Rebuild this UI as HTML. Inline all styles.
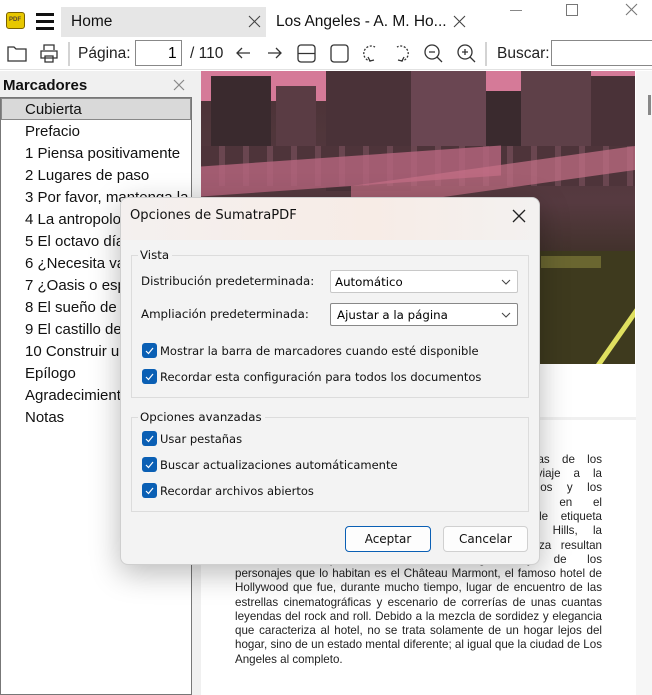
<!DOCTYPE html><html><head><style>
*{box-sizing:border-box;margin:0;padding:0}
body{width:652px;height:695px;overflow:hidden;background:#fff;font-family:"Liberation Sans",sans-serif;position:relative;color:#000}
.a{position:absolute}
.seg{font-family:"DejaVu Sans","Liberation Sans",sans-serif}
.li{position:absolute;left:25px;font-size:15px;font-family:"Liberation Sans",sans-serif;color:#111;white-space:nowrap}
.pt{position:absolute;left:235px;width:367px;font-size:11.6px;text-align:justify;text-align-last:justify;white-space:nowrap;overflow:hidden;color:#222;line-height:14px}
.cb{position:absolute;left:142px;width:15px;height:15px;background:#0a5fb4;border-radius:3px}
.cb svg{position:absolute;left:3px;top:3px}
.cl{position:absolute;left:160px;font-size:11.5px;font-family:"DejaVu Sans",sans-serif;color:#111;white-space:nowrap}
.combo{position:absolute;left:330px;width:188px;height:23px;background:#fff;border:1px solid #c8c8c8;border-radius:2px;font-size:11.8px;font-family:"DejaVu Sans",sans-serif;padding:4px 0 0 4px}
.combo svg{position:absolute;right:6px;top:8px}
.b{position:absolute}
</style></head><body>
<div class="a" style="left:6px;top:12px;width:19px;height:17px;background:#e8c800;border-radius:3px;border:1px solid #7a6200"></div>
<div class="a" style="left:9px;top:17px;font-size:6px;font-weight:bold;color:#543">PDF</div>
<div class="a" style="left:36px;top:13px;width:18px;height:3px;background:#111"></div>
<div class="a" style="left:36px;top:20px;width:18px;height:3px;background:#111"></div>
<div class="a" style="left:36px;top:27px;width:18px;height:3px;background:#111"></div>
<div class="a" style="left:61px;top:7px;width:205px;height:30px;background:#e6e6e6"></div>
<div class="a" style="left:71px;top:13px;font-size:15.5px;color:#111">Home</div>
<svg class="a" style="left:248px;top:15px" width="13" height="13" stroke="#444" stroke-width="1.1"><path d="M1 1l11 11M12 1L1 12"/></svg>
<div class="a" style="left:276px;top:13px;font-size:15.5px;color:#111">Los Angeles - A. M. Ho...</div>
<svg class="a" style="left:453px;top:15px" width="13" height="13" stroke="#444" stroke-width="1.1"><path d="M1 1l11 11M12 1L1 12"/></svg>
<div class="a" style="left:510px;top:10px;width:12px;height:1px;background:#888"></div>
<div class="a" style="left:566px;top:4px;width:12px;height:12px;border:1px solid #777"></div>
<svg class="a" style="left:625px;top:3px" width="13" height="13" stroke="#777" stroke-width="1.1"><path d="M1 1l11 11M12 1L1 12"/></svg>
<div class="a" style="left:0;top:40px;width:652px;height:30px;background:#fff;border-bottom:1px solid #e2e2e2"></div>
<svg class="a" style="left:0;top:42px" width="652" height="24" fill="none" stroke="#333" stroke-width="1.3">
<path d="M8 5h6l2 2h10v12H8z"/>
<path d="M44 8V3h10v5M41 9h16v7H41zM45 14h8v6h-8z"/>
<path d="M69 0v24" stroke="#bbb"/>
<path d="M250 11h-13m5-5l-5 5 5 5"/><path d="M268 11h13m-5-5l5 5-5 5"/>
<rect x="298" y="3" width="17" height="17" rx="3"/><path d="M298 11.5h17"/>
<rect x="331" y="3" width="17" height="17" rx="3"/>
<path d="M371 19a7.5 7.5 0 1 1 4-14" stroke-dasharray="2 1.6"/><path d="M368 15l2 4 4-1"/>
<path d="M401 19a7.5 7.5 0 1 0-4-14" stroke-dasharray="2 1.6"/><path d="M404 15l-2 4-4-1"/>
<circle cx="432" cy="10" r="7"/><path d="M437 15l5 5M429 10h6"/>
<circle cx="465" cy="10" r="7"/><path d="M470 15l5 5M462 10h6M465 7v6"/>
<path d="M486 0v24" stroke="#bbb"/>
</svg>
<div class="a" style="left:78px;top:45px;font-size:15.5px;color:#222">Página:</div>
<div class="a" style="left:135px;top:40px;width:47px;height:26px;border:1px solid #888;background:#fff"></div>
<div class="a" style="left:168px;top:45px;font-size:15.5px">1</div>
<div class="a" style="left:190px;top:45px;font-size:15.5px;color:#222">/ 110</div>
<div class="a" style="left:497px;top:45px;font-size:15.5px;color:#222">Buscar:</div>
<div class="a" style="left:551px;top:40px;width:110px;height:26px;border:1px solid #888;background:#fff"></div>
<div class="a" style="left:0;top:71px;width:198px;height:624px;background:#f0f0f0"></div>
<div class="a" style="left:3px;top:77px;font-size:15px;font-weight:bold;color:#111">Marcadores</div>
<svg class="a" style="left:173px;top:79px" width="12" height="12" stroke="#888" stroke-width="1.2"><path d="M1 1l10 10M11 1L1 11"/></svg>
<div class="a" style="left:0;top:97px;width:192px;height:598px;background:#fff;border:1px solid #777"></div>
<div class="a" style="left:1px;top:98px;width:190px;height:22px;background:#d9d9d9;border:1px solid #888"></div>
<div class="li" style="top:101px">Cubierta</div>
<div class="li" style="top:123px">Prefacio</div>
<div class="li" style="top:145px">1 Piensa positivamente</div>
<div class="li" style="top:167px">2 Lugares de paso</div>
<div class="li" style="top:189px">3 Por favor, mantenga la</div>
<div class="li" style="top:211px">4 La antropología</div>
<div class="li" style="top:233px">5 El octavo día</div>
<div class="li" style="top:255px">6 ¿Necesita vacaciones?</div>
<div class="li" style="top:277px">7 ¿Oasis o espejismo?</div>
<div class="li" style="top:299px">8 El sueño de California</div>
<div class="li" style="top:321px">9 El castillo de Hollywood</div>
<div class="li" style="top:343px">10 Construir un futuro</div>
<div class="li" style="top:365px">Epílogo</div>
<div class="li" style="top:387px">Agradecimientos</div>
<div class="li" style="top:409px">Notas</div>
<div class="a" style="left:192px;top:71px;width:460px;height:624px;background:#f0f0f0;overflow:hidden">
 <div class="a" style="left:9px;top:0;width:435px;height:346px;background:#fff"></div>
 <div class="a" style="left:9px;top:0;width:434px;height:293px;overflow:hidden;background:linear-gradient(180deg,#4a3236 0%,#563a40 45%,#3e3028 65%,#34301e 100%)">
  <div class="b" style="left:0;top:0;width:434px;height:30px;background:#d57a98"></div>
  <div class="b" style="left:10px;top:5px;width:60px;height:100px;background:#3a2a2e"></div>
  <div class="b" style="left:75px;top:15px;width:40px;height:90px;background:#5a3c44"></div>
  <div class="b" style="left:125px;top:0;width:85px;height:120px;background:#4a3238"></div>
  <div class="b" style="left:210px;top:0;width:75px;height:110px;background:#6a4652"></div>
  <div class="b" style="left:285px;top:20px;width:35px;height:90px;background:#3a2a2e"></div>
  <div class="b" style="left:320px;top:0;width:70px;height:100px;background:#5e4048"></div>
  <div class="b" style="left:390px;top:5px;width:44px;height:110px;background:#4a3238"></div>
  <div class="b" style="left:0;top:75px;width:434px;height:40px;background:repeating-linear-gradient(90deg,#4e343a 0 18px,#6a4650 18px 24px)"></div>
  <div class="b" style="left:0;top:85px;width:300px;height:30px;background:#b86680;transform:skewY(-4deg);opacity:.8"></div>
  <div class="b" style="left:150px;top:95px;width:284px;height:24px;background:#c67088;transform:skewY(-8deg);opacity:.7"></div>
  <div class="b" style="left:330px;top:180px;width:104px;height:113px;background:#3e3a1e"></div>
  <div class="b" style="left:340px;top:185px;width:60px;height:12px;background:#6a6630"></div>
  <div class="b" style="left:395px;top:293px;width:90px;height:5px;background:#e0e060;transform:rotate(-55deg);transform-origin:0 0"></div>
 </div>
 <div class="a" style="left:9px;top:349px;width:435px;height:280px;background:#fff"></div>
 <div class="a" style="left:444px;top:0;width:16px;height:624px;background:#f6f6f6"></div>
 <div class="a" style="left:456px;top:24px;width:3px;height:20px;background:#888"></div>
</div>
<div class="pt" style="top:453px">durante décadas, las diferentes subculturas urbanas de los</div>
<div class="pt" style="top:467px">que llegaron a Hollywood al principio de su viaje a la</div>
<div class="pt" style="top:481px">ciudad de los sueños, los personajes románticos y los</div>
<div class="pt" style="top:496px">trabajadores del cine, todos ellos apilados en el</div>
<div class="pt" style="top:510px">mismo lugar, con los modales y las normas de etiqueta</div>
<div class="pt" style="top:524px">que se veían en las mansiones de Beverly Hills, la</div>
<div class="pt" style="top:539px">mezcla de glamour y decadencia con que la belleza resultan</div>
<div class="pt" style="top:553px">un símbolo perfecto de Los Angeles y de los</div>
<div class="pt" style="top:567px">personajes que lo habitan es el Château Marmont, el famoso hotel de</div>
<div class="pt" style="top:581px">Hollywood que fue, durante mucho tiempo, lugar de encuentro de las</div>
<div class="pt" style="top:596px">estrellas cinematográficas y escenario de correrías de unas cuantas</div>
<div class="pt" style="top:610px">leyendas del rock and roll. Debido a la mezcla de sordidez y elegancia</div>
<div class="pt" style="top:624px">que caracteriza al hotel, no se trata solamente de un hogar lejos del</div>
<div class="pt" style="top:638px">hogar, sino de un estado mental diferente; al igual que la ciudad de Los</div>
<div class="pt" style="top:653px;text-align-last:left">Angeles al completo.</div>
<div class="a" style="left:120px;top:197px;width:420px;height:368px;background:#f3f3f3;border:1px solid #cfcfcf;border-radius:8px;box-shadow:0 8px 30px rgba(0,0,0,.28)">
 <div class="a" style="left:0;top:0;width:418px;height:42px;border-radius:8px 8px 0 0;background:linear-gradient(90deg,#f4f0ef,#f7ece6 60%,#f3f1f0)"></div>
</div>
<div class="a seg" style="left:130px;top:208px;font-size:13.1px;color:#111">Opciones de SumatraPDF</div>
<svg class="a" style="left:512px;top:209px" width="14" height="14" stroke="#222" stroke-width="1.3"><path d="M1 1l12 12M13 1L1 13"/></svg>
<div class="a" style="left:131px;top:255px;width:398px;height:143px;border:1px solid #dcdcdc"></div>
<div class="a seg" style="left:138px;top:248px;font-size:11.8px;background:#f3f3f3;padding:0 3px 0 2px;color:#111">Vista</div>
<div class="a seg" style="left:141px;top:274px;font-size:11.8px;color:#111">Distribución predeterminada:</div>
<div class="a seg" style="left:141px;top:307px;font-size:11.8px;color:#111">Ampliación predeterminada:</div>
<div class="combo" style="top:270px">Automático<svg width="10" height="6" fill="none" stroke="#444"><path d="M1 1l4 4 4-4"/></svg></div>
<div class="combo" style="top:303px;border-color:#888;padding-left:6px">Ajustar a la página<svg width="10" height="6" fill="none" stroke="#444"><path d="M1 1l4 4 4-4"/></svg></div>
<div class="cb" style="top:343px"><svg width="9" height="9" fill="none" stroke="#fff" stroke-width="1.2"><path d="M1 5l2.5 2.5L8 2"/></svg></div>
<div class="cl" style="top:344px">Mostrar la barra de marcadores cuando esté disponible</div>
<div class="cb" style="top:369px"><svg width="9" height="9" fill="none" stroke="#fff" stroke-width="1.2"><path d="M1 5l2.5 2.5L8 2"/></svg></div>
<div class="cl" style="top:370px">Recordar esta configuración para todos los documentos</div>
<div class="a" style="left:131px;top:417px;width:398px;height:95px;border:1px solid #dcdcdc"></div>
<div class="a seg" style="left:138px;top:410px;font-size:11.8px;background:#f3f3f3;padding:0 3px 0 2px;color:#111">Opciones avanzadas</div>
<div class="cb" style="top:431px"><svg width="9" height="9" fill="none" stroke="#fff" stroke-width="1.2"><path d="M1 5l2.5 2.5L8 2"/></svg></div>
<div class="cl" style="top:432px">Usar pestañas</div>
<div class="cb" style="top:457px"><svg width="9" height="9" fill="none" stroke="#fff" stroke-width="1.2"><path d="M1 5l2.5 2.5L8 2"/></svg></div>
<div class="cl" style="top:458px">Buscar actualizaciones automáticamente</div>
<div class="cb" style="top:483px"><svg width="9" height="9" fill="none" stroke="#fff" stroke-width="1.2"><path d="M1 5l2.5 2.5L8 2"/></svg></div>
<div class="cl" style="top:484px">Recordar archivos abiertos</div>
<div class="a seg" style="left:345px;top:526px;width:86px;height:26px;background:#fdfdfd;border:1.5px solid #0a5fb4;border-radius:4px;font-size:12px;text-align:center;padding-top:5px;color:#111">Aceptar</div>
<div class="a seg" style="left:443px;top:526px;width:85px;height:26px;background:#fdfdfd;border:1px solid #d0d0d0;border-radius:4px;font-size:12px;text-align:center;padding-top:5px;color:#111">Cancelar</div>
</body></html>
